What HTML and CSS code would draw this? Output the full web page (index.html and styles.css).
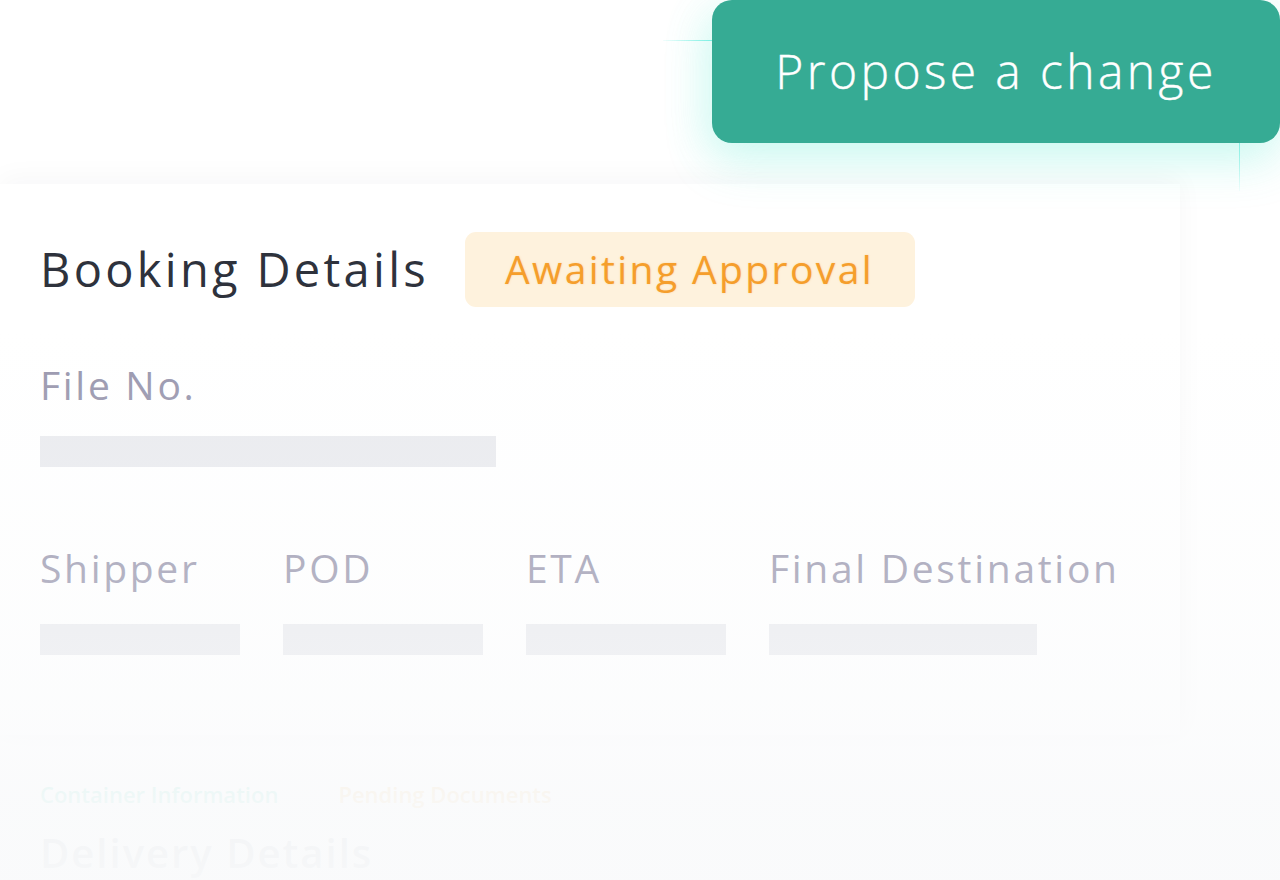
FILE: index.html
```html
<!DOCTYPE html>
<html lang="en">
<head>
<meta charset="utf-8">
<title>Booking Details</title>
<link rel="stylesheet" href="styles.css">
</head>
<body>
<div class="stage">
  <header class="topbar">
    <span class="guide-h"></span>
    <button class="propose" type="button">Propose a change</button>
    <span class="guide-v"></span>
  </header>

  <main class="sheet">
    <section class="card">
      <div class="card-head">
        <h1 class="title">Booking Details</h1>
        <span class="badge">Awaiting Approval</span>
      </div>

      <div class="field field-file">
        <div class="label">File No.</div>
        <div class="skeleton sk-file"></div>
      </div>

      <div class="row">
        <div class="field col">
          <div class="label">Shipper</div>
          <div class="skeleton sk-col"></div>
        </div>
        <div class="field col">
          <div class="label">POD</div>
          <div class="skeleton sk-col"></div>
        </div>
        <div class="field col">
          <div class="label">ETA</div>
          <div class="skeleton sk-col"></div>
        </div>
        <div class="field col">
          <div class="label">Final Destination</div>
          <div class="skeleton sk-wide"></div>
        </div>
      </div>
    </section>

    <section class="ghost">
      <div class="ghost-tabs">
        <span class="tab-teal">Container Information</span>
        <span class="tab-orange">Pending Documents</span>
      </div>
      <h2 class="ghost-title">Delivery Details</h2>
    </section>
  </main>

  <div class="fade"></div>
</div>
</body>
</html>
```

FILE: styles.css
```css
* {
  box-sizing: border-box;
}

html,
body {
  margin: 0;
  padding: 0;
  background: #ffffff;
}

body {
  font-family: "Open Sans", "Noto Sans", "DejaVu Sans", sans-serif;
  width: 1280px;
  height: 880px;
  overflow: hidden;
}

.stage {
  position: relative;
  width: 1280px;
  height: 880px;
  overflow: hidden;
  background: #ffffff;
}

/* ---------- top bar with the CTA ---------- */
.topbar {
  position: relative;
  height: 184px;
  display: flex;
  justify-content: flex-end;
  align-items: flex-start;
  z-index: 2;
}

.propose {
  width: 568px;
  height: 143px;
  margin: 0;
  border: none;
  border-radius: 20px;
  background: #36ab94;
  color: #ffffff;
  font-family: inherit;
  font-size: 48px;
  font-weight: 300;
  letter-spacing: 3.4px;
  padding: 0 0 2px 0;
  -webkit-text-stroke: 0.4px #ffffff;
  box-shadow: 0 18px 48px rgba(70, 230, 205, 0.22), -10px 8px 40px rgba(120, 240, 220, 0.14);
}

.guide-h {
  position: absolute;
  left: 663px;
  top: 40px;
  width: 49px;
  height: 1px;
  background: linear-gradient(to right, rgba(120, 240, 230, 0.1), #7df0e4);
}

.guide-v {
  position: absolute;
  left: 1239px;
  top: 143px;
  width: 1px;
  height: 48px;
  background: linear-gradient(to bottom, #86efe3, rgba(140, 240, 230, 0.1));
}

/* ---------- main sheet ---------- */
.sheet {
  position: relative;
  z-index: 1;
}

.card {
  width: 1180px;
  height: 551px;
  background: #ffffff;
  padding: 48px 0 0 40px;
  box-shadow: 0 -6px 26px rgba(20, 30, 60, 0.035);
}

.card-head {
  display: flex;
  align-items: center;
  gap: 36px;
  height: 75px;
}

.title {
  margin: 0;
  font-size: 47px;
  font-weight: 500;
  line-height: 75px;
  color: #2e323c;
  letter-spacing: 3.3px;
}

.badge {
  display: flex;
  align-items: center;
  height: 75px;
  padding: 0 41px 3px 40px;
  border-radius: 11px;
  background: #fef2dd;
  color: #f59e2c;
  font-size: 39px;
  font-weight: 500;
  letter-spacing: 2.4px;
  text-shadow: 0 0 2px rgba(245, 160, 50, 0.35);
}

.label {
  font-size: 39px;
  line-height: 48px;
  color: #9896ad;
  font-weight: 400;
  letter-spacing: 2.7px;
  white-space: nowrap;
}

.field-file {
  margin-top: 54px;
}

.skeleton {
  height: 31px;
  background: #e9eaee;
}

.sk-file {
  width: 456px;
  margin-top: 27px;
}

.row {
  display: flex;
  gap: 43px;
  margin-top: 77px;
}

.col .skeleton {
  margin-top: 32px;
}

.col {
  width: 200px;
}

.sk-col {
  width: 200px;
}

.sk-wide {
  width: 268px;
}

/* ---------- ghosted lower content ---------- */
.ghost {
  padding: 44px 0 0 40px;
}

.ghost-tabs {
  display: flex;
  gap: 60px;
  font-size: 22px;
  font-weight: 600;
  line-height: 30px;
}

.tab-teal {
  color: #b9ece2;
}

.tab-orange {
  color: #f8e2c0;
}

.ghost-title {
  margin: 20px 0 0 0;
  font-size: 40px;
  font-weight: 600;
  line-height: 48px;
  letter-spacing: 2px;
  color: #c8ccd2;
}

/* ---------- fade over the illustration ---------- */
.fade {
  position: absolute;
  left: 0;
  top: 0;
  width: 1280px;
  height: 880px;
  pointer-events: none;
  z-index: 3;
  background: linear-gradient(
    to bottom,
    rgba(249, 250, 251, 0) 0,
    rgba(249, 250, 251, 0) 330px,
    rgba(249, 250, 251, 0.12) 420px,
    rgba(249, 250, 251, 0.3) 590px,
    rgba(249, 250, 251, 0.55) 720px,
    rgba(249, 250, 251, 0.85) 800px,
    rgba(249, 250, 251, 0.94) 880px
  );
}
```
